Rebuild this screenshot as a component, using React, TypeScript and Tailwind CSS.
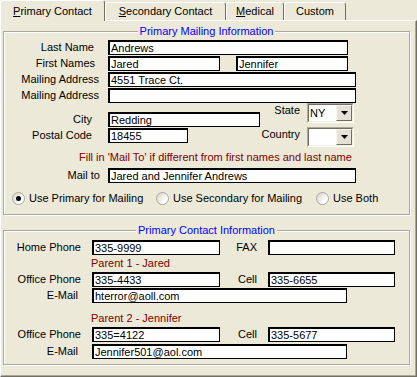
import type { ReactNode } from 'react';

function TextBox({ className, value }: { className: string; value?: string }) {
  return (
    <div
      className={`h-[15px] shrink-0 bg-white border-t-2 border-l-2 border-r border-b border-black pl-[1px] leading-[12px] whitespace-nowrap overflow-hidden ${className}`}
    >
      {value}
    </div>
  );
}

function Label({ className, children }: { className: string; children: ReactNode }) {
  return <div className={`shrink-0 text-right whitespace-nowrap ${className}`}>{children}</div>;
}

function Combo({ value }: { value?: string }) {
  return (
    <div className="w-[47px] h-[20px] border border-t-[#ACA899] border-l-[#ACA899] border-b-white border-r-white">
      <div className="h-full flex bg-white border border-t-[#716F64] border-l-[#716F64] border-b-[#F1EFE2] border-r-[#F1EFE2]">
        <div className="flex-1 pl-[1px] leading-[16px]">{value}</div>
        <div className="w-[16px] h-full flex items-center justify-center bg-[#E4E1D6] border border-t-[#F8F7F2] border-l-[#F8F7F2] border-b-[#716F64] border-r-[#716F64]">
          <svg width="7" height="4" viewBox="0 0 7 4">
            <path d="M0 0h7L3.5 4z" fill="#000" />
          </svg>
        </div>
      </div>
    </div>
  );
}

function Radio({ checked, label, className }: { checked?: boolean; label: string; className: string }) {
  return (
    <div className={`flex items-center h-[13px] ${className}`}>
      <div className="w-[13px] h-[13px] rounded-full border border-[#A8A69C] bg-[linear-gradient(135deg,#D6D3C7,#FFFFFF_70%)] flex items-center justify-center">
        {checked && <div className="w-[5px] h-[5px] rounded-full bg-black" />}
      </div>
      <span className="ml-[4px] whitespace-nowrap">{label}</span>
    </div>
  );
}

export default function App() {
  return (
    <div className="w-[417px] h-[377px] overflow-hidden bg-[#ECE9D8] text-black text-[11px] leading-[13px] font-['Liberation_Sans',Arial,sans-serif]">
      {/* tabs */}
      <div className="flex items-end h-[20px]">
        <div className="relative z-10 -mb-[1px] w-[105px] h-[21px] pt-[4px] text-center bg-[#ECE9D8] border-l border-t border-r border-l-white border-t-white border-r-[#716F64] rounded-t-[3px]">
          <u>P</u>rimary Contact
        </div>
        <div className="w-[121px] h-[18px] pt-[2px] text-center border-l border-t border-r border-l-white border-t-white border-r-[#716F64] rounded-t-[3px]">
          <u>S</u>econdary Contact
        </div>
        <div className="w-[58px] h-[18px] pt-[2px] text-center border-l border-t border-r border-l-white border-t-white border-r-[#716F64] rounded-t-[3px]">
          <u>M</u>edical
        </div>
        <div className="w-[62px] h-[18px] pt-[2px] text-center border-l border-t border-r border-l-white border-t-white border-r-[#716F64] rounded-t-[3px]">
          Custom
        </div>
      </div>

      {/* panel */}
      <div className="h-[357px] border border-t-white border-l-white border-r-[#716F64] border-b-[#716F64] shadow-[inset_-1px_-1px_0_#ACA899]">
        <fieldset className="ml-[2px] mt-[4px] w-[407px] pb-[9px] border border-[#ACA899] shadow-[inset_1px_1px_0_#fff,1px_1px_0_#fff]">
          <legend className="mx-auto px-[2px] leading-[13px] text-[#0000FF] bg-[#ECE9D8]">Primary Mailing Information</legend>

          <div className="flex flex-col gap-[1px] pt-[2px]">
            <div className="flex items-center">
              <Label className="w-[104px] pr-[14px]">Last Name</Label>
              <TextBox className="w-[240px]" value="Andrews" />
            </div>
            <div className="flex items-center">
              <Label className="w-[104px] pr-[13px]">First Names</Label>
              <TextBox className="w-[112px]" value="Jared" />
              <TextBox className="w-[112px] ml-[16px]" value="Jennifer" />
            </div>
            <div className="flex items-center">
              <Label className="w-[104px] pr-[9px]">Mailing Address</Label>
              <TextBox className="w-[248px]" value="4551 Trace Ct." />
            </div>
            <div className="flex items-center">
              <Label className="w-[104px] pr-[9px]">Mailing Address</Label>
              <TextBox className="w-[248px]" />
            </div>
          </div>

          <div className="flex items-start">
            <div className="flex flex-col gap-[1px] mt-[9px]">
              <div className="flex items-center">
                <Label className="w-[104px] pr-[16px]">City</Label>
                <TextBox className="w-[152px]" value="Redding" />
              </div>
              <div className="flex items-center">
                <Label className="w-[104px] pr-[16px]">Postal Code</Label>
                <TextBox className="w-[80px]" value="18455" />
              </div>
            </div>
            <div className="flex flex-col gap-[4px]">
              <div className="flex items-start">
                <Label className="w-[40px] pt-[1px]">State</Label>
                <div className="ml-[7px]">
                  <Combo value="NY" />
                </div>
              </div>
              <div className="flex items-start">
                <Label className="w-[40px] pt-[1px]">Country</Label>
                <div className="ml-[7px]">
                  <Combo />
                </div>
              </div>
            </div>
          </div>

          <div className="ml-[75px] mt-[4px] text-[#800000] whitespace-nowrap">
            Fill in 'Mail To' if different from first names and last name
          </div>

          <div className="flex items-center mt-[4px]">
            <Label className="w-[104px] pr-[8px]">Mail to</Label>
            <TextBox className="w-[248px]" value="Jared and Jennifer Andrews" />
          </div>

          <div className="flex mt-[9px] pl-[8px]">
            <Radio className="w-[144px]" checked label="Use Primary for Mailing" />
            <Radio className="w-[160px]" label="Use Secondary for Mailing" />
            <Radio className="w-[80px]" label="Use Both" />
          </div>
        </fieldset>

        <fieldset className="ml-[2px] mt-[9px] w-[407px] pb-[5px] border border-[#ACA899] shadow-[inset_1px_1px_0_#fff,1px_1px_0_#fff]">
          <legend className="mx-auto px-[2px] leading-[13px] text-[#0000FF] bg-[#ECE9D8]">Primary Contact Information</legend>

          <div className="flex items-center pt-[3px]">
            <Label className="w-[88px] pr-[11px]">Home Phone</Label>
            <TextBox className="w-[128px]" value="335-9999" />
            <Label className="w-[48px] pr-[11px]">FAX</Label>
            <TextBox className="w-[127px]" />
          </div>

          <div className="ml-[87px] mt-[2px] text-[#800000]">Parent 1 - Jared</div>
          <div className="flex items-center mt-[2px]">
            <Label className="w-[88px] pr-[11px]">Office Phone</Label>
            <TextBox className="w-[128px]" value="335-4433" />
            <Label className="w-[48px] pr-[11px]">Cell</Label>
            <TextBox className="w-[127px]" value="335-6655" />
          </div>
          <div className="flex items-center mt-[1px]">
            <Label className="w-[88px] pr-[14px]">E-Mail</Label>
            <TextBox className="w-[255px]" value="hterror@aoll.com" />
          </div>

          <div className="ml-[87px] mt-[9px] text-[#800000]">Parent 2 - Jennifer</div>
          <div className="flex items-center mt-[2px]">
            <Label className="w-[88px] pr-[11px]">Office Phone</Label>
            <TextBox className="w-[128px]" value="335=4122" />
            <Label className="w-[48px] pr-[11px]">Cell</Label>
            <TextBox className="w-[127px]" value="335-5677" />
          </div>
          <div className="flex items-center mt-[2px]">
            <Label className="w-[88px] pr-[14px]">E-Mail</Label>
            <TextBox className="w-[255px]" value="Jennifer501@aol.com" />
          </div>
        </fieldset>
      </div>
    </div>
  );
}
